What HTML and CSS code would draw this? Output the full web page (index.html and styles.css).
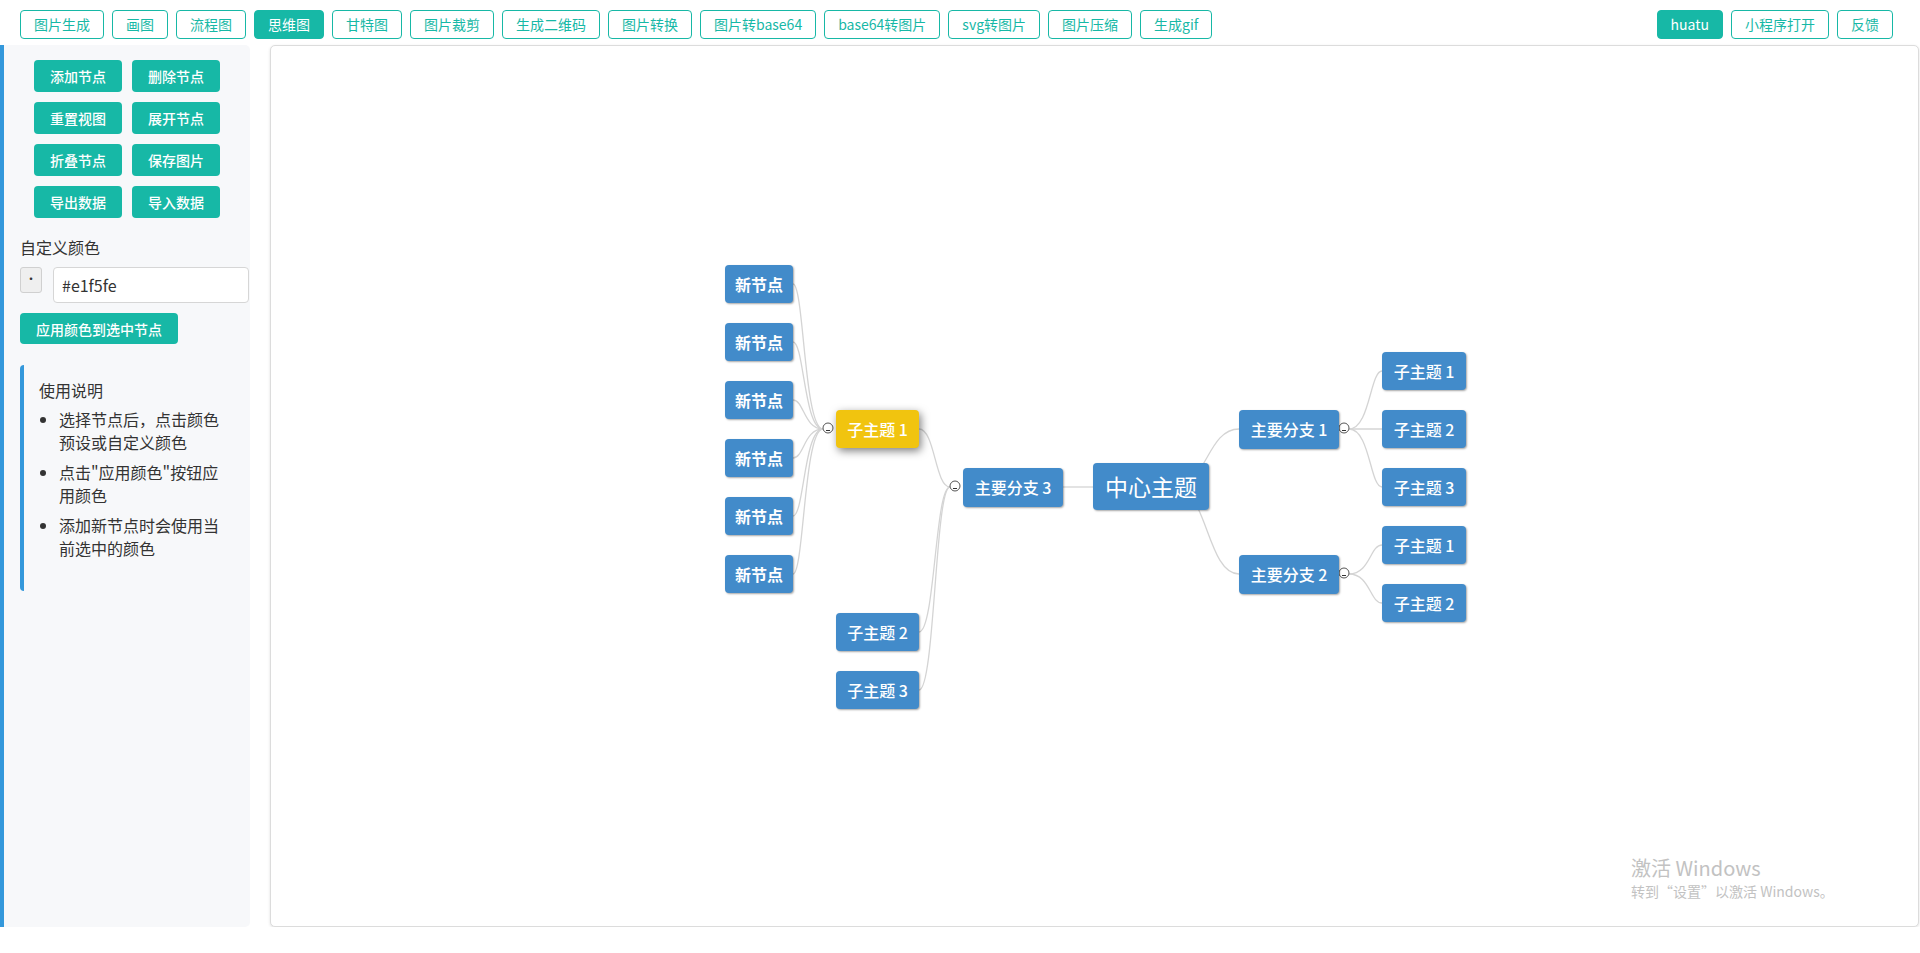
FILE: index.html
```html
<!DOCTYPE html>
<html lang="zh-CN">
<head>
    <meta charset="UTF-8">
    <meta name="viewport" content="width=device-width, initial-scale=1.0">
    <title>思维图</title>
    <link rel="stylesheet" href="styles.css">
</head>
<body>
    <header class="topbar">
        <nav class="tabs">
            <button class="tab">图片生成</button>
            <button class="tab">画图</button>
            <button class="tab">流程图</button>
            <button class="tab active">思维图</button>
            <button class="tab">甘特图</button>
            <button class="tab">图片裁剪</button>
            <button class="tab">生成二维码</button>
            <button class="tab">图片转换</button>
            <button class="tab">图片转base64</button>
            <button class="tab">base64转图片</button>
            <button class="tab">svg转图片</button>
            <button class="tab">图片压缩</button>
            <button class="tab">生成gif</button>
        </nav>
        <nav class="tabs">
            <button class="tab active">huatu</button>
            <button class="tab">小程序打开</button>
            <button class="tab">反馈</button>
        </nav>
    </header>

    <main class="workspace">
        <aside class="sidebar">
            <div class="tool-grid">
                <button class="tool-btn">添加节点</button>
                <button class="tool-btn">删除节点</button>
                <button class="tool-btn">重置视图</button>
                <button class="tool-btn">展开节点</button>
                <button class="tool-btn">折叠节点</button>
                <button class="tool-btn">保存图片</button>
                <button class="tool-btn">导出数据</button>
                <button class="tool-btn">导入数据</button>
            </div>

            <div class="color-section">
                <label class="color-label" for="colorText">自定义颜色</label>
                <div class="color-row">
                    <span class="swatch">·</span>
                    <input class="color-input" id="colorText" type="text" value="#e1f5fe">
                </div>
                <button class="tool-btn apply-btn">应用颜色到选中节点</button>
            </div>

            <div class="help">
                <div class="help-title">使用说明</div>
                <ul>
                    <li>选择节点后，点击颜色预设或自定义颜色</li>
                    <li>点击"应用颜色"按钮应用颜色</li>
                    <li>添加新节点时会使用当前选中的颜色</li>
                </ul>
            </div>
        </aside>

        <section class="canvas">
            <svg class="links" xmlns="http://www.w3.org/2000/svg">
                <g fill="none" stroke="#d4d4d4" stroke-width="1.3">
                    <!-- 子主题 1 -> 新节点 -->
                    <path d="M552 383 C533 383 533 238 522 238"/>
                    <path d="M552 383 C533 383 533 296 522 296"/>
                    <path d="M552 383 C533 383 533 354 522 354"/>
                    <path d="M552 383 C533 383 533 412 522 412"/>
                    <path d="M552 383 C533 383 533 470 522 470"/>
                    <path d="M552 383 C533 383 533 528 522 528"/>
                    <!-- 主要分支 3 -> 子主题 -->
                    <path d="M648 383 C664 383 664 441 679 441"/>
                    <path d="M648 586 C664 586 664 441 679 441"/>
                    <path d="M648 644 C664 644 664 441 679 441"/>
                    <!-- 中心主题 -> 主要分支 -->
                    <path d="M791 441 L822 441"/>
                    <path d="M904 440 C936 440 936 383 968 383"/>
                    <path d="M904 441 C936 441 936 528 968 528"/>
                    <!-- 主要分支 1 / 2 -> 子主题 -->
                    <path d="M1078 383 C1099 383 1099 325 1111 325"/>
                    <path d="M1078 383 L1111 383"/>
                    <path d="M1078 383 C1099 383 1099 441 1111 441"/>
                    <path d="M1078 528 C1099 528 1099 499 1111 499"/>
                    <path d="M1078 528 C1099 528 1099 557 1111 557"/>
                </g>
                <g class="toggle" fill="#fff" stroke="#555" stroke-width="1">
                    <circle cx="557" cy="382" r="5"/>
                    <circle cx="684" cy="440" r="5"/>
                    <circle cx="1073" cy="382" r="5"/>
                    <circle cx="1073" cy="527" r="5"/>
                </g>
                <g stroke="#333" stroke-width="1">
                    <path d="M555 384.5 H559"/>
                    <path d="M682 442.5 H686"/>
                    <path d="M1071 384.5 H1075"/>
                    <path d="M1071 529.5 H1075"/>
                </g>
            </svg>

            <div class="node node-new" style="left:454px;top:219px">新节点</div>
            <div class="node node-new" style="left:454px;top:277px">新节点</div>
            <div class="node node-new" style="left:454px;top:335px">新节点</div>
            <div class="node node-new" style="left:454px;top:393px">新节点</div>
            <div class="node node-new" style="left:454px;top:451px">新节点</div>
            <div class="node node-new" style="left:454px;top:509px">新节点</div>

            <div class="node node-sub selected" style="left:565px;top:364px">子主题 1</div>
            <div class="node node-sub" style="left:565px;top:567px">子主题 2</div>
            <div class="node node-sub" style="left:565px;top:625px">子主题 3</div>

            <div class="node node-main" style="left:692px;top:422px">主要分支 3</div>
            <div class="node node-root" style="left:822px;top:417px">中心主题</div>
            <div class="node node-main" style="left:968px;top:364px">主要分支 1</div>
            <div class="node node-main" style="left:968px;top:509px">主要分支 2</div>

            <div class="node node-sub right" style="left:1111px;top:306px">子主题 1</div>
            <div class="node node-sub right" style="left:1111px;top:364px">子主题 2</div>
            <div class="node node-sub right" style="left:1111px;top:422px">子主题 3</div>
            <div class="node node-sub right" style="left:1111px;top:480px">子主题 1</div>
            <div class="node node-sub right" style="left:1111px;top:538px">子主题 2</div>
        </section>
    </main>

    <div class="activate">
        <div class="activate-title">激活 Windows</div>
        <div class="activate-sub">转到“设置”以激活 Windows。</div>
    </div>
</body>
</html>
```

FILE: styles.css
```css
body {
    margin: 0;
    font-family: "Noto Sans CJK SC", "Noto Sans", sans-serif;
    color: #333;
    background-color: #fff;
    overflow: hidden;
}

button {
    font-family: inherit;
    cursor: pointer;
}

/* 顶部导航 */
.topbar {
    height: 45px;
    box-sizing: border-box;
    padding: 10px 27px 0 20px;
    display: flex;
    justify-content: space-between;
    align-items: flex-start;
}

.tabs {
    display: flex;
    gap: 8px;
}

.tab {
    height: 29px;
    padding: 0 13px;
    border: 1px solid #17b8a6;
    border-radius: 4px;
    background-color: #fff;
    color: #17b8a6;
    font-size: 14px;
    line-height: 27px;
}

.tab.active {
    background-color: #17b8a6;
    color: #fff;
}

/* 主体 */
.workspace {
    display: flex;
    gap: 20px;
    height: 882px;
    padding-right: 1px;
}

.sidebar {
    width: 250px;
    flex-shrink: 0;
    box-sizing: border-box;
    padding: 15px 16px 0 16px;
    border-left: 4px solid #3498db;
    border-radius: 0 5px 5px 0;
    background-color: #f7f8fa;
}

.tool-grid {
    display: grid;
    grid-template-columns: repeat(2, 88px);
    gap: 10px;
    justify-content: center;
}

.tool-btn {
    height: 32px;
    padding: 0;
    border: none;
    border-radius: 4px;
    background-color: #17b8a6;
    color: #fff;
    font-size: 14px;
    font-weight: 500;
}

.color-section {
    margin-top: 17px;
}

.color-label {
    display: block;
    font-size: 16px;
    line-height: 24px;
    margin-bottom: 8px;
}

.color-row {
    display: flex;
    align-items: flex-start;
    gap: 11px;
    width: 230px;
}

.swatch {
    width: 22px;
    height: 26px;
    box-sizing: border-box;
    border: 1px solid #d0d0d0;
    border-radius: 3px;
    background-color: #efefef;
    color: #333;
    font-size: 12px;
    line-height: 22px;
    text-align: center;
}

.color-input {
    width: 196px;
    height: 36px;
    box-sizing: border-box;
    padding: 0 8px;
    border: 1px solid #d6d6d6;
    border-radius: 4px;
    font-family: inherit;
    font-size: 16px;
    color: #333;
}

.apply-btn {
    margin-top: 10px;
    width: 158px;
    height: 31px;
}

.help {
    margin-top: 21px;
    padding: 13px 15px 15px 15px;
    border-left: 4px solid #3498db;
    border-radius: 4px;
    font-size: 16px;
    line-height: 23px;
}

.help-title {
    line-height: 24px;
}

.help ul {
    margin: 6px 0 16px 0;
    padding-left: 20px;
    width: 166px;
}

.help li {
    margin-bottom: 7px;
}

.help li:last-child {
    margin-bottom: 0;
}

/* 画布 */
.canvas {
    flex: 1;
    position: relative;
    border: 1px solid #dcdcdc;
    border-radius: 5px;
    background-color: #fff;
    box-shadow: 0 1px 3px rgba(0, 0, 0, 0.12);
    overflow: hidden;
}

.links {
    position: absolute;
    top: 0;
    left: 0;
    width: 100%;
    height: 100%;
}

.node {
    position: absolute;
    height: 38px;
    box-sizing: border-box;
    border-radius: 4px;
    background-color: #428bca;
    color: #fff;
    font-size: 16px;
    font-weight: 500;
    line-height: 38px;
    text-align: center;
    white-space: nowrap;
    box-shadow: 1px 1px 2px rgba(0, 0, 0, 0.35);
}

.node-new {
    width: 68px;
    font-weight: 700;
}

.node-sub {
    width: 83px;
}

.node-sub.right {
    width: 84px;
}

.node-main {
    width: 100px;
    height: 39px;
    line-height: 39px;
}

.node-root {
    width: 116px;
    height: 47px;
    font-size: 23px;
    line-height: 47px;
    font-weight: 400;
}

.node.selected {
    background-color: #f1c40f;
    box-shadow: 2px 3px 8px rgba(0, 0, 0, 0.5);
}

/* 系统水印 */
.activate {
    position: absolute;
    left: 1631px;
    top: 855px;
    color: #c2c2c2;
    pointer-events: none;
}

.activate-title {
    font-size: 20px;
    line-height: 26px;
}

.activate-sub {
    font-size: 14px;
    line-height: 20px;
}
```
